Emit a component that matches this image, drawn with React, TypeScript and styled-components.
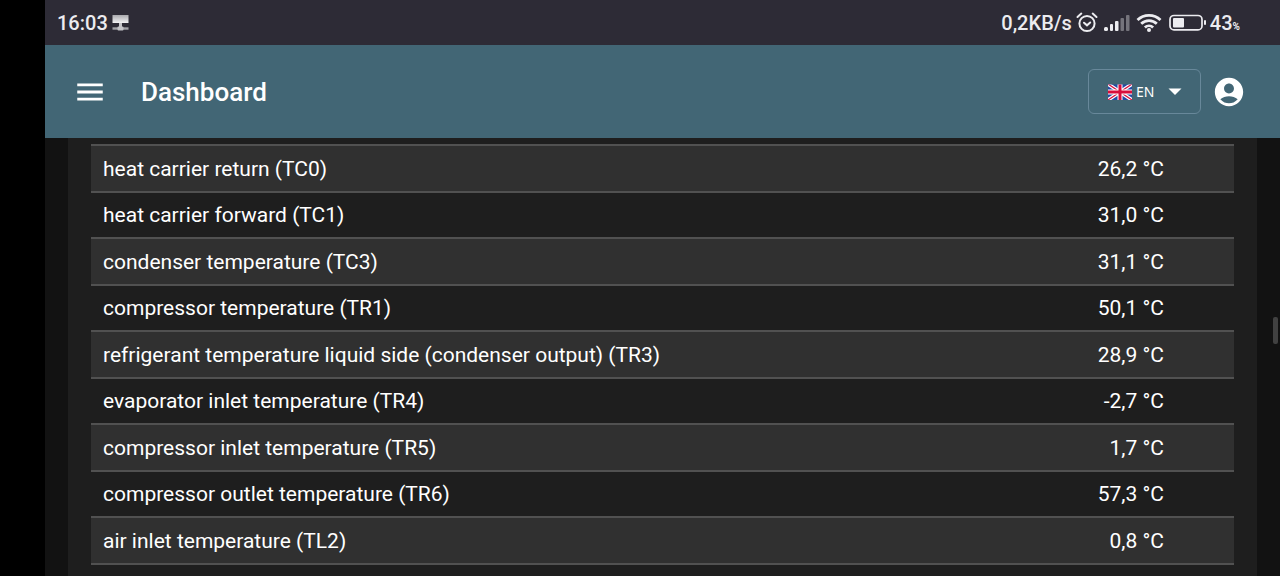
import React from 'react';
import styled, { createGlobalStyle } from 'styled-components';

const GlobalStyle = createGlobalStyle`
  *, *::before, *::after { box-sizing: border-box; }
  body {
    margin: 0;
    background: #000;
    color: #fff;
    font-family: Roboto, 'Liberation Sans', sans-serif;
  }
`;

const Screen = styled.div`
  display: flex;
  flex-direction: column;
  min-height: 100vh;
  padding-left: 45px;
`;

const StatusBar = styled.div`
  display: flex;
  align-items: center;
  justify-content: space-between;
  height: 45px;
  padding: 0 40px 0 12px;
  background: #2d2b36;
  color: #ececf0;
  font-size: 20px;
  font-weight: 500;
  line-height: 24px;
`;

const StatusGroup = styled.div<{ $gap: number }>`
  display: flex;
  align-items: center;
  gap: ${({ $gap }) => $gap}px;
`;

const Charge = styled.span`
  display: flex;
  align-items: baseline;
`;

const Percent = styled.small`
  font-size: 10px;
  font-weight: 700;
  line-height: 12px;
`;

const AppBar = styled.header`
  display: flex;
  align-items: center;
  height: 93px;
  padding: 0 34px 0 28px;
  background: #426675;
`;

const IconButton = styled.button`
  display: flex;
  padding: 0;
  border: 0;
  background: none;
  color: inherit;
  cursor: pointer;
`;

const Title = styled.h1`
  flex: 1;
  margin: 0 0 0 34px;
  font-size: 26px;
  font-weight: 500;
  line-height: 32px;
`;

const LanguageField = styled.label`
  display: flex;
  align-items: center;
  height: 45px;
  margin-right: 11px;
  padding: 0 15px 0 19px;
  border: 1px solid #68889a;
  border-radius: 6px;
`;

const LanguageSelect = styled.select`
  width: 29px;
  margin-left: 4px;
  padding: 0;
  border: 0;
  appearance: none;
  background: none;
  color: inherit;
  font-family: 'Noto Sans', sans-serif;
  font-size: 14px;
  line-height: 20px;
`;

const Content = styled.main`
  display: flex;
  flex: 1;
  padding: 0 23px;
  background: #121212;
`;

const Card = styled.section`
  flex: 1;
  padding: 6px 23px 10px;
  background: #1e1e1e;
`;

const Table = styled.table`
  width: 100%;
  border-spacing: 0;
  border-top: 2px solid #515151;
  font-size: 21px;
  line-height: 24px;
`;

const Row = styled.tr`
  height: 46px;

  &:nth-child(odd) {
    height: 47px;
    background: #303030;
  }
`;

const NameCell = styled.th`
  padding: 0 12px;
  border-bottom: 2px solid #515151;
  font-weight: 400;
  text-align: left;
`;

const ValueCell = styled.td`
  padding: 0 70px 0 12px;
  border-bottom: 2px solid #515151;
  text-align: right;
`;

const ScrollThumb = styled.div`
  position: fixed;
  top: 55%;
  right: 2px;
  width: 5px;
  height: 27px;
  border-radius: 2px;
  background: #414141;
`;

const NetworkIcon = () => (
  <svg width="18" height="18" viewBox="0 0 18 18" aria-hidden="true">
    <defs>
      <linearGradient id="monitor" x1="0" y1="0" x2="0" y2="1">
        <stop offset="0" stopColor="#a9a9ad" />
        <stop offset="1" stopColor="#f2f2f4" />
      </linearGradient>
    </defs>
    <rect x="0.5" y="1" width="16" height="8" fill="url(#monitor)" />
    <path d="M7 9h3v4H7z" fill="#c4c4c8" />
    <path d="M0.500 14.500h16" stroke="#a4a4a9" strokeWidth="2.400" />
    <rect x="5.500" y="12.500" width="6" height="4" rx="1" fill="#c4c4c8" />
  </svg>
);

const AlarmIcon = () => (
  <svg width="22" height="22" viewBox="0 0 22 22" fill="none" stroke="currentColor" strokeWidth="2" strokeLinecap="round" aria-hidden="true">
    <circle cx="11" cy="11.500" r="7.600" />
    <path d="M8 10.700l3 2.600 3.200-2.800M1.500 5 5.300 1.600M20.500 5 16.700 1.600" />
  </svg>
);

const SignalIcon = () => (
  <svg width="26" height="18" viewBox="0 0 26 18" fill="currentColor" aria-hidden="true">
    <rect x="0" y="13" width="4" height="4" rx="1.500" />
    <rect x="6" y="10" width="3" height="7" rx="1" />
    <rect x="11" y="7" width="3.500" height="10" rx="1" />
    <rect x="16.500" y="4" width="3.500" height="13" rx="1" opacity=".38" />
    <rect x="22" y="1" width="3.500" height="16" rx="1" opacity=".38" />
  </svg>
);

const WifiIcon = () => (
  <svg width="26" height="20" viewBox="0 0 26 20" fill="none" stroke="currentColor" strokeWidth="2.800" aria-hidden="true">
    <path d="M1.500 7a16.500 16.500 0 0 1 23 0M5.200 10.800a11.200 11.200 0 0 1 15.600 0M8.900 14.500a6 6 0 0 1 8.200 0" />
    <circle cx="13" cy="17" r="2" fill="currentColor" stroke="none" />
  </svg>
);

const BatteryIcon = () => (
  <svg width="38" height="18" viewBox="0 0 38 18" aria-hidden="true">
    <rect x="2" y="1.500" width="32" height="14.400" rx="4" fill="none" stroke="currentColor" strokeWidth="1.700" />
    <rect x="5" y="4" width="11" height="9.500" rx="1" fill="currentColor" />
    <rect x="36" y="6" width="2" height="5" rx="1" fill="currentColor" />
  </svg>
);

const MenuIcon = () => (
  <svg width="34" height="34" viewBox="0 0 24 24" fill="currentColor" aria-hidden="true">
    <path d="M3 18h18v-2H3v2zm0-5h18v-2H3v2zm0-7v2h18V6H3z" />
  </svg>
);

const AccountIcon = () => (
  <svg width="34" height="34" viewBox="0 0 24 24" fill="currentColor" aria-hidden="true">
    <path d="M12 2C6.480 2 2 6.480 2 12s4.480 10 10 10 10-4.480 10-10S17.520 2 12 2zm0 4c1.930 0 3.500 1.570 3.500 3.500S13.930 13 12 13s-3.500-1.570-3.500-3.500S10.070 6 12 6zm0 14c-2.030 0-4.430-.820-6.140-2.880C7.550 15.800 9.680 15 12 15s4.450.800 6.140 2.120C16.430 19.180 14.030 20 12 20z" />
  </svg>
);

const FlagIcon = () => (
  <svg width="24" height="18" viewBox="0 0 24 18" aria-hidden="true">
    <defs>
      <clipPath id="flag">
        <path d="M0 1.500h24v15.500H0z" />
      </clipPath>
    </defs>
    <g clipPath="url(#flag)">
      <path d="M0 1h24v16H0z" fill="#244aa5" />
      <path d="M0 1l24 16M24 1L0 17" stroke="#fff" strokeWidth="3.600" />
      <path d="M0 1l24 16M24 1L0 17" stroke="#d80d3c" strokeWidth="1.200" />
      <path d="M12 1v16M0 9h24" stroke="#fff" strokeWidth="5" />
      <path d="M12 1v16M0 9h24" stroke="#d80d3c" strokeWidth="3" />
    </g>
  </svg>
);

const CaretIcon = () => (
  <svg width="20" height="10" viewBox="0 0 20 10" fill="currentColor" aria-hidden="true">
    <path d="M3.500 1.500h13L10 8z" />
  </svg>
);

const readings = [
  { name: 'heat carrier return (TC0)', value: '26,2 °C' },
  { name: 'heat carrier forward (TC1)', value: '31,0 °C' },
  { name: 'condenser temperature (TC3)', value: '31,1 °C' },
  { name: 'compressor temperature (TR1)', value: '50,1 °C' },
  { name: 'refrigerant temperature liquid side (condenser output) (TR3)', value: '28,9 °C' },
  { name: 'evaporator inlet temperature (TR4)', value: '-2,7 °C' },
  { name: 'compressor inlet temperature (TR5)', value: '1,7 °C' },
  { name: 'compressor outlet temperature (TR6)', value: '57,3 °C' },
  { name: 'air inlet temperature (TL2)', value: '0,8 °C' },
];

export default function App() {
  return (
    <>
      <GlobalStyle />
      <Screen>
        <StatusBar>
          <StatusGroup $gap={4}>
            <span>16:03</span>
            <NetworkIcon />
          </StatusGroup>
          <StatusGroup $gap={6}>
            <StatusGroup $gap={4}>
              <span>0,2KB/s</span>
              <AlarmIcon />
            </StatusGroup>
            <SignalIcon />
            <WifiIcon />
            <StatusGroup $gap={4}>
              <BatteryIcon />
              <Charge>43<Percent>%</Percent></Charge>
            </StatusGroup>
          </StatusGroup>
        </StatusBar>
        <AppBar>
          <IconButton type="button" aria-label="Open menu">
            <MenuIcon />
          </IconButton>
          <Title>Dashboard</Title>
          <LanguageField>
            <FlagIcon />
            <LanguageSelect aria-label="Language" defaultValue="en">
              <option value="en">EN</option>
            </LanguageSelect>
            <CaretIcon />
          </LanguageField>
          <IconButton type="button" aria-label="Account">
            <AccountIcon />
          </IconButton>
        </AppBar>
        <Content>
          <Card>
            <Table>
              <tbody>
                {readings.map(({ name, value }) => (
                  <Row key={name}>
                    <NameCell scope="row">{name}</NameCell>
                    <ValueCell>{value}</ValueCell>
                  </Row>
                ))}
              </tbody>
            </Table>
          </Card>
        </Content>
        <ScrollThumb />
      </Screen>
    </>
  );
}
